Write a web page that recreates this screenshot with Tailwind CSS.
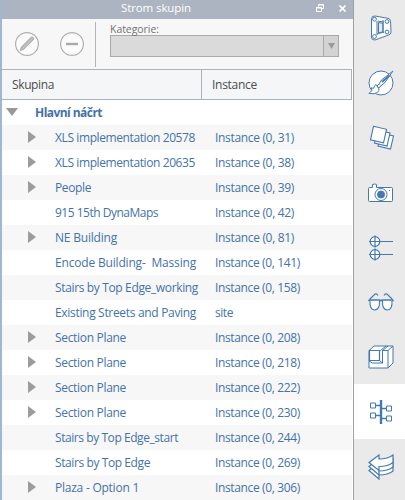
<!DOCTYPE html>
<html lang="cs">
<head>
<meta charset="utf-8">
<title>Strom skupin</title>
<script src="https://cdn.jsdelivr.net/npm/@tailwindcss/browser@4"></script>
</head>
<body class="h-[500px] w-[405px] overflow-hidden bg-white font-['Open_Sans','Noto_Sans',sans-serif] text-[12px]">
<div class="flex h-[500px] w-[405px]">
  <main class="flex h-full w-[353px] shrink-0 flex-col border-l-2 border-[#a3b5d0] bg-white">
    <header class="flex h-[19px] shrink-0 items-center bg-[#abb4c0] pl-[119px] text-white">
      <span class="-mt-[4px] w-[71px] whitespace-nowrap text-[11.5px] leading-[16px]" data-w="70" data-font="11.5px">Strom skupin</span>
      <svg class="ml-[124px] -mt-[3px]" width="8" height="8" viewBox="0 0 8 8" fill="none" stroke="white"><path d="M2.5 3V.5h5v4H6M2 1h6M.5 3.5h5v4h-5zM0 4h6"/></svg>
      <svg class="ml-[15px] -mt-[3px]" width="7" height="7" viewBox="0 0 7 7" stroke="white" stroke-width="1.7"><path d="M.5.5l6 6M6.5.5l-6 6"/></svg>
    </header>
    <section class="flex h-[50px] shrink-0 bg-[#f7f7f7] pl-[13px]">
      <svg class="mt-[13px]" width="24" height="24" viewBox="0 0 24 24"><circle cx="12" cy="12" r="11.4" fill="#fbfbfb" stroke="#b0b0b0" stroke-width="1.2"/><path d="M5.3 18.5l1-3.4L16 5.3q1.3-.8 2.3.2t.1 2.2L8.7 17.4z" fill="#b8b8b8" stroke="#a6a6a6" stroke-width=".8"/><path d="M7 16.8L17 6.8" stroke="#d3d3d3" stroke-width=".7"/></svg>
      <svg class="ml-[21px] mt-[13px]" width="24" height="24" viewBox="0 0 24 24"><circle cx="12" cy="12" r="11.4" fill="#fbfbfb" stroke="#b0b0b0" stroke-width="1.2"/><path d="M6 12h12" stroke="#aaa" stroke-width="2.4"/></svg>
      <div class="ml-[11px] mt-[3px] h-[45px] w-px bg-[#b1b5bb]"></div>
      <div class="ml-[14px] pt-[2px]">
        <div class="h-[14px] text-[10.5px] leading-[16px] text-[#737373]"><span class="whitespace-nowrap" data-w="49" data-font="10.5px">Kategorie:</span></div>
        <div class="flex h-[22px] w-[229px] border border-[#a9a9a9] bg-[#dadada]">
          <div class="flex-1"></div>
          <div class="flex w-[15px] items-center justify-center border-l border-[#a9a9a9] bg-[#d3d3d3]"><svg width="7" height="6" viewBox="0 0 7 6"><path d="M0 0h7L3.5 6z" fill="#9a9a9a"/></svg></div>
        </div>
      </div>
    </section>
    <section class="flex h-[31px] w-[350px] shrink-0 items-center border-y border-r border-[#abb2ba] bg-[#f4f6f8] text-[#4d4d4d]">
      <div class="w-[199px] pl-[10px]"><span class="whitespace-nowrap" data-w="42">Skupina</span></div>
      <div class="flex h-full flex-1 items-center border-l border-[#abb2ba] pl-[10px]"><span class="whitespace-nowrap" data-w="45">Instance</span></div>
    </section>
    <section class="flex h-[25px] shrink-0 items-center pl-[4px] font-bold text-[#4373aa]">
      <svg class="-mt-[1px]" width="12" height="8" viewBox="0 0 12 8"><path d="M0 0h12L6 8z" fill="#999"/></svg>
      <span class="ml-[17px] whitespace-nowrap" data-w="67" data-font="bold 12px">Hlavní náčrt</span>
    </section>
    <section id="rows" class="w-[350px] text-[#4373aa]"></section>
  </main>
  <aside class="flex h-full w-[50px] flex-1 flex-col border-l border-[#a0a0a0] bg-[#eaeaea] text-[#4579ae]">
    <div class="flex h-[55px] shrink-0 items-center justify-center pl-[3px]"><svg width="22" height="26" viewBox="0 0 22 26" fill="white" stroke="currentColor"><path d="M1.5 3.5Q2 .7 5 1L18 3.3q2.5.5 2.5 3L21 17q0 2.5-2.5 3L5 25q-3.5.5-3.5-3z"/><path d="M8.5 7.5l4.5.8v8.5l-4.5 1z" fill="#eaeaea"/><path fill="none" d="M7 6v14M13 5v13M8 6l6 1.2M7 19l7-2"/><circle cx="4.5" cy="4.2" r="1.9"/><circle cx="4.5" cy="21.5" r="1.9"/><circle cx="17" cy="6.5" r="1.9"/><circle cx="17" cy="17" r="1.9"/></svg></div>
    <div class="flex h-[55px] shrink-0 items-center justify-center pl-[3px]"><svg width="26" height="26" viewBox="0 0 26 26" fill="white" stroke="currentColor"><circle cx="13" cy="13" r="12"/><path d="M25 1L13.5 10l-2.5 4 1.5 2 4-3z"/><path d="M11 14l-2 2 1.7 2.2 2-2.2M9 16l-1-1.5q-2 1-2.3 3.8L3 17.8l1 2.5-3 3.2q6 1 8.7-1.2 2-2 1-4.1z"/><path d="M14 12L21.5 5.5" stroke-width="1.8"/></svg></div>
    <div class="flex h-[55px] shrink-0 items-center justify-center pl-[4px]"><svg width="26" height="26" viewBox="0 0 26 26" fill="white" stroke="currentColor" stroke-width="1.1"><path d="M12 8l12.5 3-3 13-12.5-3z"/><path d="M8.5 5l12.5 3-3 13-12.5-3z"/><path d="M4.5 1.3l13 3-3 13.5-13-3z"/></svg></div>
    <div class="flex h-[55px] shrink-0 items-center justify-center pl-[3px]"><svg width="26" height="20" viewBox="0 0 26 20" fill="white" stroke="currentColor"><path d="M1.5 4.5h3v-3q2.5-1 4 0v3h15q1 0 1 1v12q0 1-1 1h-22q-1 0-1-1v-12q0-1 1-1z"/><circle cx="13" cy="11.5" r="6"/><circle cx="13" cy="11.5" r="3.5" fill="currentColor"/><path d="M21 7.5h1"/></svg></div>
    <div class="flex h-[55px] shrink-0 items-center justify-center pl-[3px]"><svg width="26" height="26" viewBox="0 0 26 26" fill="white" stroke="currentColor" stroke-width="1.2"><circle cx="7" cy="6.5" r="4.8"/><circle cx="7" cy="19.5" r="4.8"/><path d="M1 6.5h24M7 .5v12M1 19.5h24M7 13.5v12"/></svg></div>
    <div class="flex h-[55px] shrink-0 items-center justify-center pl-[3px]"><svg class="-mt-[2px]" width="26" height="18" viewBox="0 0 26 18" fill="white" stroke="currentColor" stroke-width="1.1"><path d="M2 7.5h9.5Q12 17 6.5 17 1.5 16.5 2 7.5zM24 7.5h-9.5Q14 17 19.5 17 24.5 16.5 24 7.5z"/><path d="M.5 8l1-1H11l2 .6 2-.6h9.5l1 1" stroke-width="1.7"/><path fill="none" d="M1.5 6.5L7 1q2-.5 3 1.5M24.5 6.5L19 1q-2-.5-3 1.5"/></svg></div>
    <div class="flex h-[54px] shrink-0 items-center justify-center pl-[3px]"><svg width="26" height="24" viewBox="0 0 26 24" fill="white" stroke="currentColor"><path d="M1 5.5L6 1h19v17l-5 5H1z"/><path fill="none" d="M1 5.5h11.5L18 1M14.5 5.5H20V23M20 5.5L25 1M14.5 5.5L20 1M14.5 5.5v12.5H4.5L1 16"/><path d="M1.5 5.5h10v10h-10z" stroke-width="1.2"/><path fill="none" d="M11.5 15.5l3 2.5"/></svg></div>
    <div class="flex h-[55px] shrink-0 items-center justify-center bg-white pl-[3px]"><svg width="24" height="26" viewBox="0 0 24 26" fill="white" stroke="currentColor"><path d="M12 1v24" stroke-width="2.4"/><path d="M6 6.5h6M12 9.5h6M6 16.5h6M12 19.5h6" stroke-width="1.5"/><path d="M1.5 4h5v5h-5zM17.5 7h5v5h-5zM1.5 14h5v5h-5zM17.5 17h5v5h-5z"/></svg></div>
    <div class="flex h-[56px] shrink-0 items-center justify-center pl-[3px]"><svg width="26" height="26" viewBox="0 0 26 26" fill="white" stroke="currentColor" stroke-width="1.2"><path d="M1 16.5l10-7.5v4q9 0 14-4v8q-5 4-14 4v4z"/><path d="M1 12.5l10-7.5v4q9 0 14-4v8q-5 4-14 4v4z"/><path d="M1 8.5l10-7.5v4q9 0 14-4v7.5q-5 4-14 4v4z"/></svg></div>
  </aside>
</div>
<script>
const rows = [
  ["XLS implementation 20578","Instance (0, 31)",1,140,79],
  ["XLS implementation 20635","Instance (0, 38)",1,140,79],
  ["People","Instance (0, 39)",1,36,79],
  ["915 15th DynaMaps","Instance (0, 42)",0,103,79],
  ["NE Building","Instance (0, 81)",1,62,79],
  ["Encode Building-\u00a0 Massing","Instance (0, 141)",0,141,85],
  ["Stairs by Top Edge_working","Instance (0, 158)",0,143,85],
  ["Existing Streets and Paving","site",0,141,18],
  ["Section Plane","Instance (0, 208)",1,71,85],
  ["Section Plane","Instance (0, 218)",1,71,85],
  ["Section Plane","Instance (0, 222)",1,71,85],
  ["Section Plane","Instance (0, 230)",1,71,85],
  ["Stairs by Top Edge_start","Instance (0, 244)",0,123,85],
  ["Stairs by Top Edge","Instance (0, 269)",0,95,85],
  ["Plaza - Option 1","Instance (0, 306)",1,84,85]
];
document.getElementById("rows").innerHTML = rows.map(([name, inst, kids, nw, iw]) => `
  <div class="flex h-[25px] items-center odd:bg-[#f7f7f7]">
    <div class="flex w-[53px] pl-[26px]">${kids ? '<svg class="-mt-[2px]" width="8" height="12" viewBox="0 0 8 12"><path d="M0 0l8 6-8 6z" fill="#9c9c9c"/></svg>' : ''}</div>
    <div class="w-[160px]"><span class="whitespace-nowrap" data-w="${nw}">${name}</span></div>
    <div><span class="whitespace-nowrap" data-w="${iw}">${inst}</span></div>
  </div>`).join("");
const ctx = document.createElement("canvas").getContext("2d");
document.querySelectorAll("[data-w]").forEach(el => {
  ctx.font = (el.dataset.font || "12px") + ' "Open Sans"';
  const natural = ctx.measureText(el.textContent).width;
  el.style.letterSpacing = (Number(el.dataset.w) - natural) / el.textContent.length + "px";
});
</script>
</body>
</html>
